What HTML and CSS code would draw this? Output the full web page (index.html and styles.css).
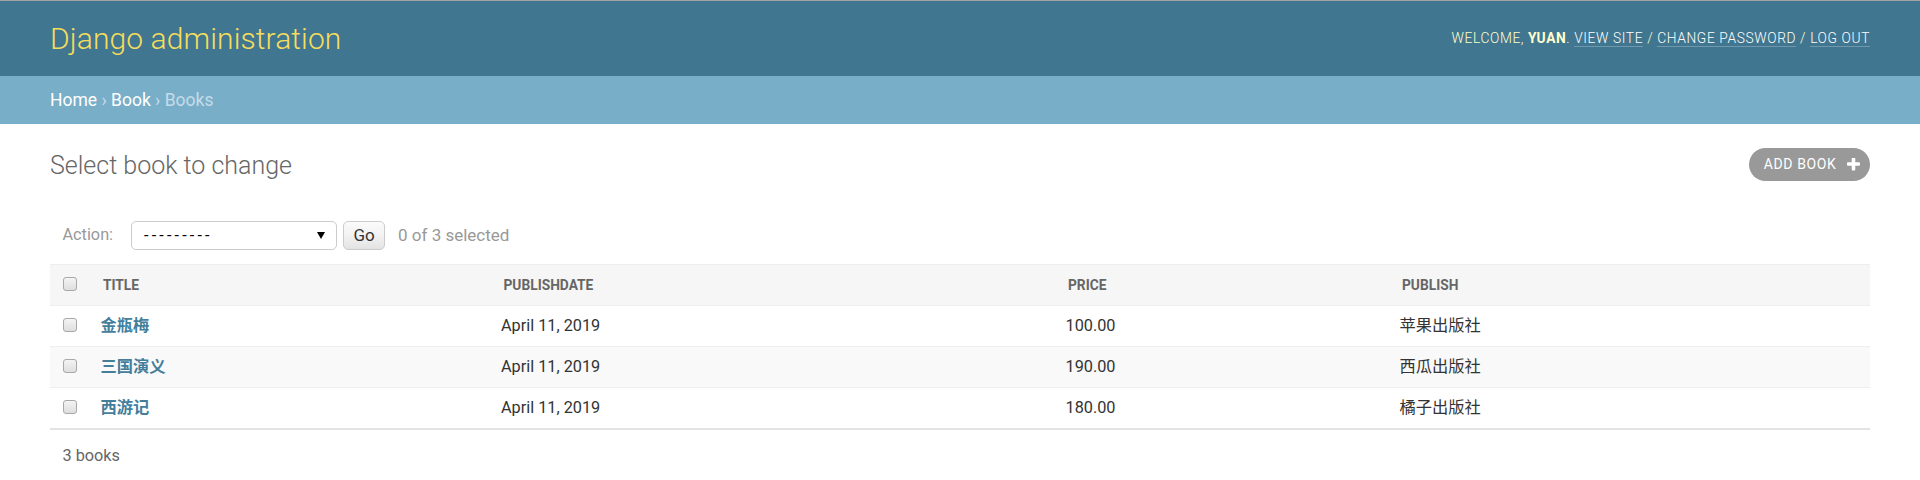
FILE: index.html
```html
<!DOCTYPE html>
<html lang="zh">
<head>
<meta charset="utf-8">
<title>Select book to change | Django site admin</title>
<link rel="stylesheet" href="styles.css">
</head>
<body>
<div class="header">
  <div class="branding">Django administration</div>
  <div class="user-tools">Welcome, <strong>yuan</strong>. <a href="#">View site</a> / <a href="#">Change password</a> / <a href="#">Log out</a></div>
</div>
<div class="breadcrumbs"><a href="#">Home</a> › <a href="#">Book</a> › Books</div>
<div class="content">
  <div class="title-row">
    <h1>Select book to change</h1>
    <a class="addlink" href="#">Add book
      <svg class="plus" viewBox="192 192 1408 1408" width="13" height="13"><path fill="#fff" d="M1600 736v192q0 40-28 68t-68 28h-416v416q0 40-28 68t-68 28h-192q-40 0-68-28t-28-68v-416h-416q-40 0-68-28t-28-68v-192q0-40 28-68t68-28h416v-416q0-40 28-68t68-28h192q40 0 68 28t28 68v416h416q40 0 68 28t28 68z"/></svg>
    </a>
  </div>
  <div class="actions">
    <span class="action-label">Action:</span>
    <span class="select"><span class="select-text">---------</span><svg class="arrow" viewBox="0 0 8 7" width="8" height="7"><path d="M0 0h8L4 7z" fill="#000"/></svg></span>
    <span class="go">Go</span>
    <span class="counter">0 of 3 selected</span>
  </div>
  <table class="results">
    <colgroup>
      <col class="c-check"><col class="c-title"><col class="c-date"><col class="c-price"><col class="c-publish">
    </colgroup>
    <thead>
      <tr>
        <th class="check"><span class="cb"></span></th>
        <th><span class="text">Title</span></th>
        <th><span class="text">Publishdate</span></th>
        <th><span class="text">Price</span></th>
        <th><span class="text">Publish</span></th>
      </tr>
    </thead>
    <tbody>
      <tr class="row1">
        <td class="check"><span class="cb"></span></td>
        <th><a href="#">金瓶梅</a></th>
        <td>April 11, 2019</td>
        <td>100.00</td>
        <td>苹果出版社</td>
      </tr>
      <tr class="row2">
        <td class="check"><span class="cb"></span></td>
        <th><a href="#">三国演义</a></th>
        <td>April 11, 2019</td>
        <td>190.00</td>
        <td>西瓜出版社</td>
      </tr>
      <tr class="row1">
        <td class="check"><span class="cb"></span></td>
        <th><a href="#">西游记</a></th>
        <td>April 11, 2019</td>
        <td>180.00</td>
        <td>橘子出版社</td>
      </tr>
    </tbody>
  </table>
  <p class="paginator">3 books</p>
</div>
</body>
</html>
```
FILE: styles.css
```css
html, body {
  margin: 0;
  padding: 0;
}
body {
  font-family: Roboto, "Noto Sans CJK SC", "DejaVu Sans", sans-serif;
  font-size: 17.5px;
  line-height: 1.32;
  color: #333;
  background: #fff;
  border-top: 1px solid #a3a3a3;
}
a {
  text-decoration: none;
}

/* Header */
.header {
  display: flex;
  justify-content: space-between;
  align-items: center;
  padding: 12.5px 50px;
  background: #417690;
  line-height: 50px;
  color: #ffc;
}
.branding {
  font-size: 30px;
  font-weight: 300;
  color: #f5dd5d;
  letter-spacing: 0.1px;
}
.user-tools {
  font-size: 13.75px;
  font-weight: 300;
  letter-spacing: 0.625px;
  text-transform: uppercase;
  color: #ffc;
  line-height: 1.32;
}
.user-tools strong {
  font-weight: 700;
}
.user-tools a {
  color: #fff;
  border-bottom: 1px solid rgba(255, 255, 255, 0.25);
}

/* Breadcrumbs */
.breadcrumbs {
  background: #79aec8;
  padding: 12.5px 50px;
  color: #c4dce8;
  font-size: 17.5px;
}
.breadcrumbs a {
  color: #fff;
}

/* Content */
.content {
  padding: 25px 50px 0;
}
.title-row {
  display: flex;
  justify-content: space-between;
  align-items: center;
  height: 33px;
  margin-bottom: 26px;
}
.title-row h1 {
  margin: 0;
  font-size: 25px;
  font-weight: 300;
  color: #666;
  line-height: 33px;
}
.addlink {
  display: flex;
  align-items: center;
  gap: 10px;
  margin-bottom: 2px;
  padding: 3.75px 10.5px 3.75px 15px;
  background: #999;
  color: #fff;
  border-radius: 18px;
  font-size: 14px;
  letter-spacing: 0.625px;
  text-transform: uppercase;
  line-height: 25.5px;
}
.plus {
  display: block;
}

/* Actions */
.actions {
  display: flex;
  align-items: center;
  padding: 12px 12.5px 13.5px;
  height: 30px;
  color: #999;
  font-size: 16.25px;
}
.action-label {
  margin-right: 18px;
}
.select {
  box-sizing: border-box;
  width: 206px;
  height: 29px;
  display: flex;
  align-items: center;
  justify-content: space-between;
  padding: 0 11px 0 12px;
  border: 1px solid #ccc;
  border-radius: 5px;
  color: #000;
  font-size: 16px;
  margin-right: 6px;
}
.select-text {
  letter-spacing: 3.2px;
}
.arrow {
  display: block;
}
.go {
  box-sizing: border-box;
  height: 29px;
  width: 42px;
  display: flex;
  align-items: center;
  justify-content: center;
  border: 1px solid #ccc;
  border-radius: 5px;
  background: linear-gradient(#fbfbfb, #f3f3f3 45%, #e3e3e3);
  color: #333;
  font-size: 17px;
  margin-right: 13px;
}
.counter {
  color: #999;
  font-size: 17px;
}

/* Table */
.results {
  width: 100%;
  table-layout: fixed;
  border-collapse: collapse;
  font-size: 16.25px;
  line-height: 20px;
}
.c-check { width: 40.5px; }
.c-title { width: 400.5px; }
.c-date { width: 564.5px; }
.c-price { width: 334px; }
.results thead th {
  background: #f6f6f6;
  border-top: 1px solid #eee;
  border-bottom: 1px solid #eee;
  color: #666;
  font-size: 13.75px;
  font-weight: 700;
  text-transform: uppercase;
  text-align: left;
  padding: 0;
  vertical-align: top;
}
.results thead th .text {
  display: block;
  padding: 10px 12.5px;
}
.results thead th.check {
  padding: 10px;
}
.results td,
.results tbody th {
  padding: 10px;
  border-bottom: 1px solid #eee;
  text-align: left;
  vertical-align: top;
  font-weight: 400;
}
.results tbody th {
  font-weight: 700;
}
.results tbody th a {
  color: #447e9b;
}
.results tbody tr:last-child td,
.results tbody tr:last-child th {
  border-bottom: 2px solid #e3e3e3;
}
.row1 { background: #fff; }
.row2 { background: #f9f9f9; }

.cb {
  display: block;
  box-sizing: border-box;
  width: 14px;
  height: 14px;
  margin: 2px 0 0 3px;
  border: 1px solid #a9a9a9;
  border-radius: 3px;
  background: linear-gradient(#f4f4f4, #dedede);
}

/* Paginator */
.paginator {
  margin: 0;
  padding: 12.5px 12.5px;
  font-size: 16.25px;
  line-height: 27.5px;
  color: #666;
}
```
